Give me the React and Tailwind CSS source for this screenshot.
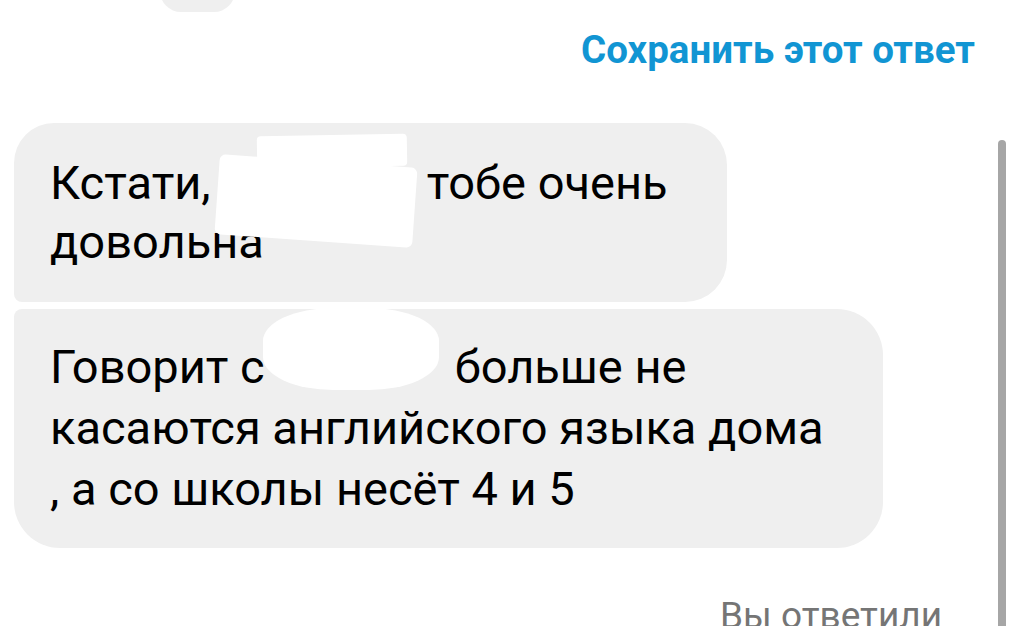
import React from 'react'

// Chat screen fragment: saved-reply link, two grey incoming bubbles, reply label.
const font = { fontFamily: 'Roboto, "Noto Sans", "Liberation Sans", sans-serif' }

function Hidden({ className }) {
  // white smudge that hides part of the message
  return <span className={'pointer-events-none absolute bg-white ' + className} />
}

export default function App() {
  return (
    <div className="relative w-[1015px] h-[626px] overflow-hidden bg-white" style={font}>
      <div className="ml-[160px] mt-[-30px] h-[42px] w-[75px] rounded-full bg-[#efefef]" />

      <div className="flex justify-end pr-[40px] mt-[15px]">
        <span className="text-[38.5px] leading-[46px] font-bold text-[#1195d3]">
          Сохранить этот ответ
        </span>
      </div>

      <div className="flex flex-col gap-[7px] pl-[14px] mt-[50px]">
        <div className="relative w-[713px] h-[179px] pt-[30px] pl-[36px] bg-[#efefef] rounded-tl-[40px] rounded-tr-[42px] rounded-br-[42px] rounded-bl-[8px] text-[47px] leading-[59px] text-black">
          <div className="flex">
            <span>Кстати,</span>
            <span className="w-[216px]" />
            <span>тобе очень</span>
          </div>
          <div>довольна</div>
          <Hidden className="left-[243px] top-[12px] w-[150px] h-[32px] rotate-[-1deg] rounded-[4px]" />
          <Hidden className="left-[203px] top-[38px] w-[198px] h-[80px] rotate-[4deg] rounded-[6px]" />
        </div>

        <div className="relative w-[869px] h-[239px] pt-[27px] pl-[36px] bg-[#efefef] rounded-tl-[8px] rounded-tr-[46px] rounded-br-[46px] rounded-bl-[46px] text-[47px] leading-[61px] text-black">
          <div className="flex">
            <span>Говорит с</span>
            <span className="w-[190px]" />
            <span>больше не</span>
          </div>
          <div>касаются английского языка дома</div>
          <div>, а со школы несёт 4 и 5</div>
          <Hidden className="left-[249px] top-[-1px] w-[176px] h-[82px] rounded-[40%]" />
        </div>
      </div>

      <div className="flex justify-end pr-[73px] mt-[46px]">
        <span className="text-[37px] leading-[44px] text-[#757575]">Вы ответили</span>
      </div>

      <div className="absolute right-[9px] top-[140px] bottom-0 w-[8px] rounded-t-full bg-[#a6a6a6]" />
    </div>
  )
}
